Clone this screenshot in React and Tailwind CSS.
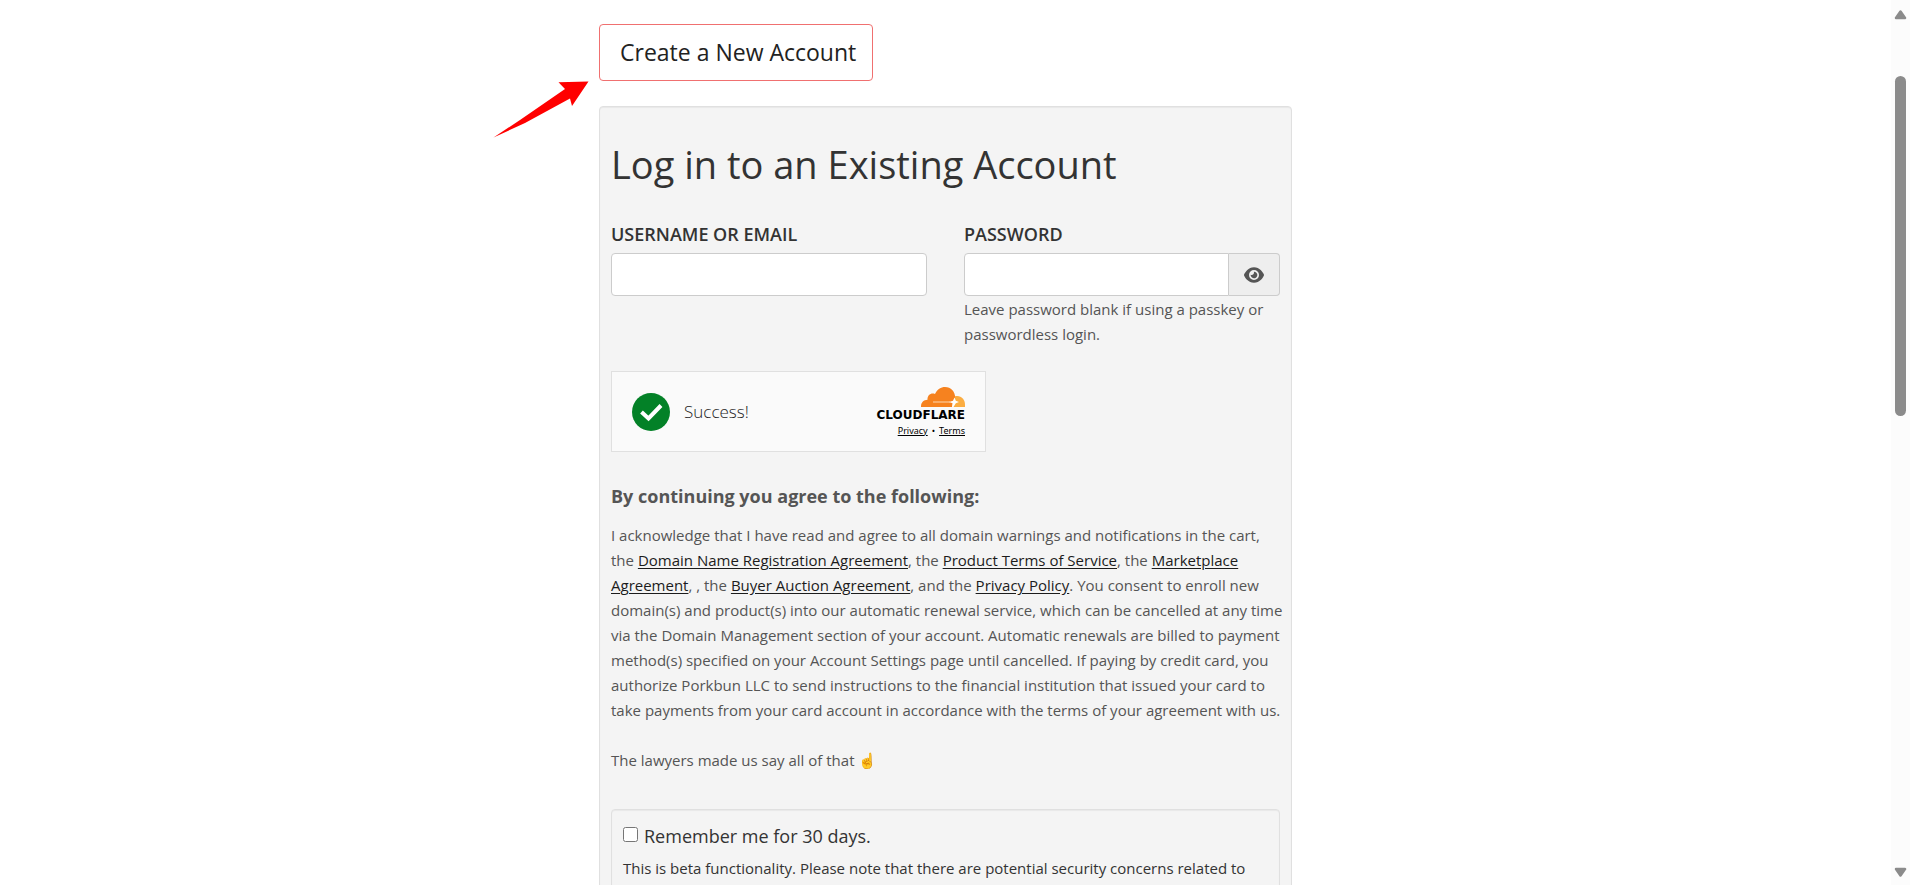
import { useState } from 'react';
import { FaEye } from 'react-icons/fa6';

const LINK = 'text-[#1c1c1c] underline underline-offset-2';
const INPUT = 'h-[43px] min-w-0 w-full border border-[#cccccc] bg-white px-3 text-lg text-[#555555] outline-none';

function Arrow() {
    return (
        <svg className="absolute right-full top-[57px] mr-2.5" width="96" height="58" viewBox="0 0 96 58">
            <path d="M95.5 0.5 65.5 1.2 72 8 27 39 0.5 56.5 32 42 77 17.5 79 25Z" fill="#ff0000" />
        </svg>
    );
}

function CloudflareLogo() {
    return (
        <svg width="44" height="20" viewBox="0 0 44 20">
            <path d="M34 9.2c5.500-1.500 10 2.600 10 8.300V20H31z" fill="#fbad41" />
            <path
                d="M0 20c-.2-4.200 2.500-7.200 6.500-7.300C6.300 8.200 9.800 5.500 14 7 16 2.500 20 0 24 0c6 0 10 4.600 10.200 10.200L31 20z"
                fill="#f6821f"
            />
            <path d="M12 14.300h17v1.400H12z" fill="#fbc08a" />
            <path d="M33.500 10.500 34.800 13.800 38 15 34.800 16.200 32.500 20H31l.5-3.800-3.500-1.200 4-1.200z" fill="#ffffff" />
        </svg>
    );
}

function Turnstile() {
    return (
        <div className="flex h-[81px] w-[375px] items-center border border-[#e0e0e0] bg-[#fafafa] px-5">
            <svg width="38" height="38" viewBox="0 0 38 38">
                <circle cx="19" cy="19" r="19" fill="#038127" />
                <path d="M9.500 19 16.500 25.500 29 12.500" fill="none" stroke="#ffffff" strokeWidth="4" />
            </svg>
            <span className="ml-3.5 flex-1 text-[17px] font-light text-[#232323]">Success!</span>
            <div className="flex flex-col items-end text-black">
                <CloudflareLogo />
                <span className="mt-0.5 text-[12px] leading-3 font-bold font-['DejaVu_Sans']">CLOUDFLARE</span>
                <span className="mt-1 flex gap-1 text-[9px] leading-3 font-['Noto_Sans']">
                    <a href="#privacy" className="underline">Privacy</a>
                    <span>•</span>
                    <a href="#terms" className="underline">Terms</a>
                </span>
            </div>
        </div>
    );
}

function ScrollBar() {
    return (
        <div className="flex h-full w-[19px] shrink-0 flex-col items-center bg-[#fcfcfc] pt-2.5 pb-2">
            <svg width="13" height="10" viewBox="0 0 13 10">
                <path d="M6.500 1.500 11 8H2z" fill="#8b8b8b" stroke="#8b8b8b" strokeWidth="2.500" strokeLinejoin="round" />
            </svg>
            <div className="flex w-full flex-1 flex-col items-center pt-14">
                <div className="h-[43%] w-[11px] rounded-full bg-[#8b8b8b]" />
            </div>
            <svg width="13" height="10" viewBox="0 0 13 10">
                <path d="M6.500 8.500 11 2H2z" fill="#8b8b8b" stroke="#8b8b8b" strokeWidth="2.500" strokeLinejoin="round" />
            </svg>
        </div>
    );
}

export default function App() {
    const [showPassword, setShowPassword] = useState(false);

    return (
        <div className="flex h-screen overflow-hidden bg-white font-['Open_Sans',sans-serif] text-[15px] leading-[25px] text-[#555555]">
            <main className="min-w-0 flex-1 pt-6">
                <div className="mx-auto w-full max-w-[693px]">
                    <div className="relative">
                        <button
                            type="button"
                            className="block h-[57px] rounded-[4px] border border-[#f07070] bg-white pl-5 pr-4 text-[23px] text-[#222222]"
                        >
                            Create a New Account
                        </button>
                        <Arrow />
                    </div>

                    <form className="mt-[25px] rounded-[4px] border border-[#e0e0e0] bg-[#f4f4f4] px-[11px] pt-8 pb-12 shadow-[inset_0_1px_1px_rgba(0,0,0,0.05)]">
                        <h1 className="text-[38px] leading-[50px] text-[#333333]">
                            Log in to an Existing Account
                        </h1>

                        <div className="mt-[33px] grid grid-cols-2 gap-[37px]">
                            <div>
                                <label htmlFor="username" className="mb-1.5 block text-lg leading-[25px] font-semibold text-[#333333]">
                                    USERNAME OR EMAIL
                                </label>
                                <input id="username" type="text" className={`${INPUT} rounded-[4px]`} />
                            </div>
                            <div>
                                <label htmlFor="password" className="mb-1.5 block text-lg leading-[25px] font-semibold text-[#333333]">
                                    PASSWORD
                                </label>
                                <div className="flex">
                                    <input
                                        id="password"
                                        type={showPassword ? 'text' : 'password'}
                                        className={`${INPUT} rounded-l-[4px]`}
                                    />
                                    <button
                                        type="button"
                                        aria-label="Show password"
                                        onClick={() => setShowPassword(!showPassword)}
                                        className="flex w-[51px] shrink-0 items-center justify-center rounded-r-[4px] border border-l-0 border-[#cccccc] bg-[#eeeeee]"
                                    >
                                        <FaEye size={20} />
                                    </button>
                                </div>
                                <p className="mt-px">Leave password blank if using a passkey or passwordless login.</p>
                            </div>
                        </div>

                        <div className="mt-6">
                            <Turnstile />
                        </div>

                        <h2 className="mt-8 text-lg leading-[25px] font-bold">By continuing you agree to the following:</h2>

                        <p className="mt-3.5 -mr-1">
                            I acknowledge that I have read and agree to all domain warnings and notifications in the cart, the{' '}
                            <a href="#registration" className={LINK}>Domain Name Registration Agreement</a>, the{' '}
                            <a href="#terms-of-service" className={LINK}>Product Terms of Service</a>, the{' '}
                            <a href="#marketplace" className={LINK}>Marketplace Agreement</a>, , the{' '}
                            <a href="#auction" className={LINK}>Buyer Auction Agreement</a>, and the{' '}
                            <a href="#privacy-policy" className={LINK}>Privacy Policy</a>. You consent to enroll new
                            domain(s) and product(s) into our automatic renewal service, which can be cancelled at any
                            time via the Domain Management section of your account. Automatic renewals are billed to
                            payment method(s) specified on your Account Settings page until cancelled. If paying by
                            credit card, you authorize Porkbun LLC to send instructions to the financial institution
                            that issued your card to take payments from your card account in accordance with the terms
                            of your agreement with us.
                        </p>
                        <p className="mt-[25px]">The lawyers made us say all of that ☝️</p>

                        <div className="mt-9 rounded-[4px] border border-[#e0e0e0] px-[11px] pt-3 pb-12 text-[#333333] shadow-[inset_0_1px_1px_rgba(0,0,0,0.05)]">
                            <label className="flex items-center gap-1.5 text-lg leading-7">
                                <input type="checkbox" className="mb-1 h-[15px] w-[15px]" />
                                Remember me for 30 days.
                            </label>
                            <p className="mt-1.5">
                                This is beta functionality. Please note that there are potential security concerns related to
                            </p>
                        </div>
                    </form>
                </div>
            </main>
            <ScrollBar />
        </div>
    );
}
